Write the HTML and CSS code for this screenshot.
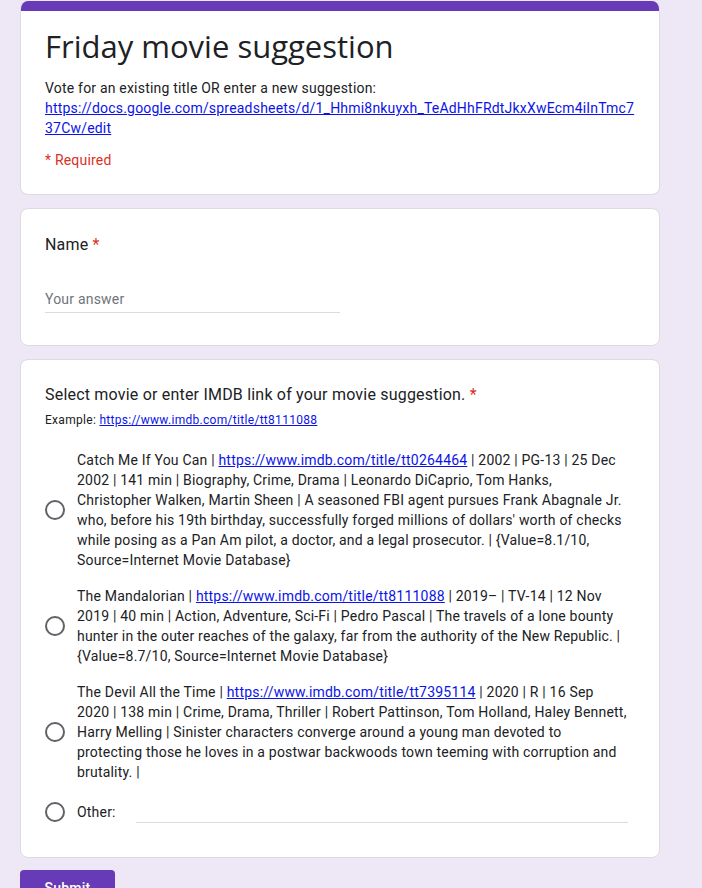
FILE: index.html
```html
<!DOCTYPE html>
<html>
<head>
<meta charset="utf-8">
<link rel="stylesheet" href="styles.css">
</head>
<body>
<div class="page">
  <div class="card header-card">
    <div class="bar"></div>
    <div class="header-body">
      <h1 class="title">Friday movie suggestion</h1>
      <div class="desc">Vote for an existing title OR enter a new suggestion:<br><a href="#">https://docs.google.com/spreadsheets/d/1_Hhmi8nkuyxh_TeAdHhFRdtJkxXwEcm4iInTmc737Cw/edit</a></div>
      <div class="required-note">* Required</div>
    </div>
  </div>

  <div class="card q-card name-card">
    <div class="q-title">Name <span class="star">*</span></div>
    <div class="text-input">
      <span class="placeholder">Your answer</span>
    </div>
  </div>

  <div class="card q-card q-choice">
    <div class="q-title">Select movie or enter IMDB link of your movie suggestion. <span class="star">*</span></div>
    <div class="q-help">Example: <a href="#">https://www.imdb.com/title/tt8111088</a></div>
    <div class="options">
      <div class="option">
        <span class="radio"></span>
        <div class="opt-text">Catch Me If You Can | <a href="#">https://www.imdb.com/title/tt0264464</a> | 2002 | PG-13 | 25 Dec 2002 | 141 min | Biography, Crime, Drama | Leonardo DiCaprio, Tom Hanks, Christopher Walken, Martin Sheen | A seasoned FBI agent pursues Frank Abagnale Jr. who, before his 19th birthday, successfully forged millions of dollars' worth of checks while posing as a Pan Am pilot, a doctor, and a legal prosecutor. | {Value=8.1/10, Source=Internet Movie Database}</div>
      </div>
      <div class="option">
        <span class="radio"></span>
        <div class="opt-text">The Mandalorian | <a href="#">https://www.imdb.com/title/tt8111088</a> | 2019– | TV-14 | 12 Nov 2019 | 40 min | Action, Adventure, Sci-Fi | Pedro Pascal | The travels of a lone bounty hunter in the outer reaches of the galaxy, far from the authority of the New Republic. | {Value=8.7/10, Source=Internet Movie Database}</div>
      </div>
      <div class="option">
        <span class="radio"></span>
        <div class="opt-text">The Devil All the Time | <a href="#">https://www.imdb.com/title/tt7395114</a> | 2020 | R | 16 Sep 2020 | 138 min | Crime, Drama, Thriller | Robert Pattinson, Tom Holland, Haley Bennett, Harry Melling | Sinister characters converge around a young man devoted to protecting those he loves in a postwar backwoods town teeming with corruption and brutality. |</div>
      </div>
      <div class="option other">
        <span class="radio"></span>
        <div class="opt-text other-label">Other:</div>
        <div class="other-input"></div>
      </div>
    </div>
  </div>

  <div class="actions">
    <button class="submit">Submit</button>
  </div>
</div>
</body>
</html>
```

FILE: styles.css
```css
html, body {
  margin: 0;
  padding: 0;
}
body {
  background: #ede7f6;
  font-family: Roboto, "Liberation Sans", Arial, sans-serif;
  color: #202124;
  font-size: 14px;
  line-height: 20px;
  letter-spacing: 0.2px;
}
a {
  color: #0b14e8;
  text-decoration: underline;
}
.page {
  width: 640px;
  margin-left: 20px;
  padding-top: 1px;
}
.card {
  background: #fff;
  border: 1px solid #dadce0;
  border-radius: 8px;
  margin-bottom: 13px;
  overflow: hidden;
}
.header-card {
  border-top: none;
}
.bar {
  height: 10px;
  background: #673ab7;
}
.header-body {
  padding: 15px 24px 24px 24px;
}
.title {
  margin: 0;
  font-family: "Open Sans", Roboto, sans-serif;
  font-weight: 400;
  font-size: 31px;
  line-height: 40px;
  color: #202124;
  letter-spacing: 0;
}
.desc {
  margin-top: 12px;
  word-break: break-all;
}
.required-note {
  margin-top: 12px;
  color: #d93025;
}
.q-card {
  padding: 23px 24px 24px 24px;
}
.name-card {
  padding-top: 24px;
}
.q-choice {
  margin-bottom: 12px;
}
.q-title {
  font-size: 16px;
  line-height: 24px;
  color: #202124;
}
.star {
  color: #d93025;
}
.text-input {
  margin-top: 23px;
  width: 295px;
  height: 32px;
  border-bottom: 1px solid #dadce0;
  display: flex;
  align-items: center;
  margin-bottom: 8px;
}
.placeholder {
  color: #70757a;
  font-size: 14px;
  padding-top: 6px;
}
.q-help {
  font-size: 12px;
  line-height: 16px;
  margin-top: 5px;
  letter-spacing: 0.3px;
}
.options {
  margin-top: 22px;
  display: flex;
  flex-direction: column;
  gap: 16px;
}
.option {
  display: flex;
  align-items: center;
  gap: 12px;
}
.radio {
  flex: none;
  width: 16px;
  height: 16px;
  border: 2px solid #5f6368;
  border-radius: 50%;
}
.opt-text {
  width: 551px;
  color: #202124;
}
.other {
  margin-bottom: 8px;
}
.other-label {
  width: auto;
  flex: none;
}
.other-input {
  flex: none;
  width: 492px;
  margin-left: 8px;
  height: 24px;
  margin-bottom: 2px;
  border-bottom: 1px solid #dadce0;
  align-self: flex-start;
}
.submit {
  background: #673ab7;
  color: #fff;
  border: none;
  border-radius: 4px;
  font-family: Roboto, sans-serif;
  font-weight: 500;
  font-size: 14px;
  letter-spacing: 0.25px;
  height: 36px;
  width: 95px;
  padding: 0;
}
```
